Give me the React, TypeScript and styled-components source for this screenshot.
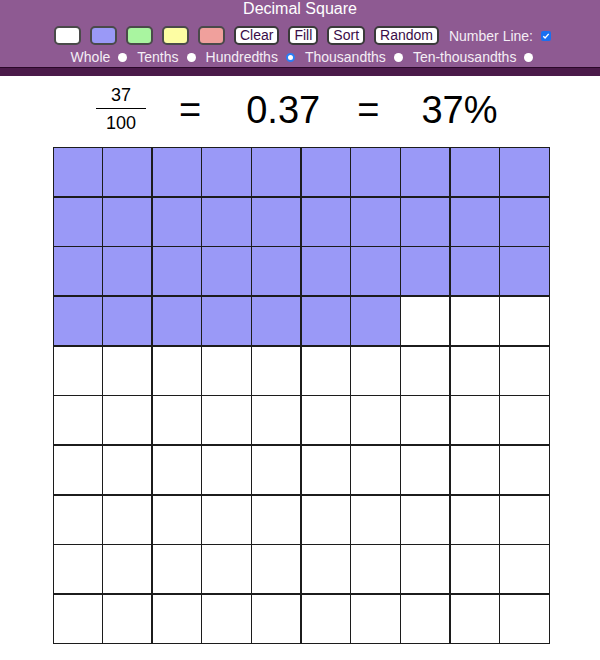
import styled, { createGlobalStyle } from "styled-components";

const GlobalStyle = createGlobalStyle`
    body {
        margin: 0;
        background: #ffffff;
        font-family: "Liberation Sans", Arial, sans-serif;
    }
`

const Header = styled.header`
    background-color: #8e5a92;
    height: 67px;
    display: flex;
    flex-direction: column;
    align-items: center;
`
const Band = styled.div`
    height: 8px;
    background-color: #4b1a4a;
    border-top: 1px solid #2a0829;
`
const Title = styled.h1`
    margin: 0;
    font-size: 16px;
    font-weight: normal;
    line-height: 18px;
    color: #ffffff;
`
const Toolbar = styled.div`
    display: flex;
    align-items: center;
    gap: 9px;
    margin-top: 8px;
    padding-left: 5px;
`
const Swatch = styled.button<{ $color: string }>`
    width: 27px;
    height: 19px;
    padding: 0;
    border: 2px solid #4a4a4a;
    border-radius: 5px;
    background-color: ${p => p.$color};
`
const TextButton = styled.button`
    height: 19px;
    padding: 0 4px;
    border: 2px solid #3a3a3a;
    border-radius: 5px;
    background-color: #ffffff;
    color: #3a0d48;
    font-family: "Liberation Sans", Arial, sans-serif;
    font-size: 14px;
    line-height: 15px;
`
const Label = styled.span`
    color: #f4eef5;
    font-size: 14px;
    margin-left: 1px;
`
const Check = styled.span`
    display: inline-flex;
    align-items: center;
    justify-content: center;
    width: 10px;
    height: 10px;
    border-radius: 2px;
    background-color: #1a6ff0;
    margin-left: -1px;
`
const RadioRow = styled.div`
    display: flex;
    align-items: center;
    margin-top: 4px;
    padding-left: 14px;
    font-size: 14px;
    line-height: 16px;
`
const RadioLabel = styled.span`
    color: #f4eef5;
    margin-right: 8px;
`
const Dot = styled.span<{ $selected?: boolean }>`
    width: 9px;
    height: 9px;
    border-radius: 50%;
    box-sizing: border-box;
    background-color: #ffffff;
    border: ${p => (p.$selected ? "2px solid #2a7ef5" : "none")};
    margin-right: 10px;
`

const Equation = styled.div`
    height: 71px;
    box-sizing: border-box;
    padding-bottom: 4px;
    padding-left: 96px;
    display: flex;
    align-items: center;
    font-size: 38px;
    color: #000000;
`
const Fraction = styled.div`
    display: flex;
    flex-direction: column;
    align-items: center;
    width: 50px;
    font-size: 18px;
    line-height: 20px;
    margin-top: -1px;
`
const Numerator = styled.span`
    align-self: stretch;
    text-align: center;
    padding-bottom: 3px;
    border-bottom: 1px solid #000000;
`
const Denominator = styled.span`
    padding-top: 4px;
`
const Big = styled.span<{ $before: number }>`
    line-height: 44px;
    margin-left: ${p => p.$before}px;
`

const Grid = styled.div`
    width: 495px;
    margin: 0 auto;
    display: grid;
    grid-template-columns: repeat(10, 1fr);
    gap: 1.5px;
    background-color: #1c1c1c;
    border: 1.5px solid #1c1c1c;
    position: relative;
    left: 1px;
`
const Cell = styled.div<{ $on: boolean }>`
    aspect-ratio: 1;
    background-color: ${p => (p.$on ? "#9a99f7" : "#ffffff")};
`

const swatches = ["#ffffff", "#9a99f7", "#a9f5a0", "#fdfda3", "#f0a09c"];
const levels = ["Whole", "Tenths", "Hundredths", "Thousandths", "Ten-thousandths"];
const filled = 37;

const App = () => {
    return (
        <>
            <GlobalStyle />
            <Header>
                <Title>Decimal Square</Title>
                <Toolbar>
                    {swatches.map(c => <Swatch key={c} $color={c} />)}
                    <TextButton>Clear</TextButton>
                    <TextButton>Fill</TextButton>
                    <TextButton>Sort</TextButton>
                    <TextButton>Random</TextButton>
                    <Label>Number Line:</Label>
                    <Check>
                        <svg width="8" height="8" viewBox="0 0 8 8">
                            <path d="M1.3 4.2 L3.1 6 L6.7 1.9" fill="none" stroke="#fff" strokeWidth="1.4" />
                        </svg>
                    </Check>
                </Toolbar>
                <RadioRow>
                    {levels.map(l => (
                        <span key={l} style={{ display: "contents" }}>
                            <RadioLabel>{l}</RadioLabel>
                            <Dot $selected={l === "Hundredths"} />
                        </span>
                    ))}
                </RadioRow>
            </Header>
            <Band />
            <Equation>
                <Fraction>
                    <Numerator>37</Numerator>
                    <Denominator>100</Denominator>
                </Fraction>
                <Big $before={33}>=</Big>
                <Big $before={45}>0.37</Big>
                <Big $before={37}>=</Big>
                <Big $before={42}>37%</Big>
            </Equation>
            <Grid>
                {Array.from({ length: 100 }, (_, i) => <Cell key={i} $on={i < filled} />)}
            </Grid>
        </>
    )
}

export default App;
